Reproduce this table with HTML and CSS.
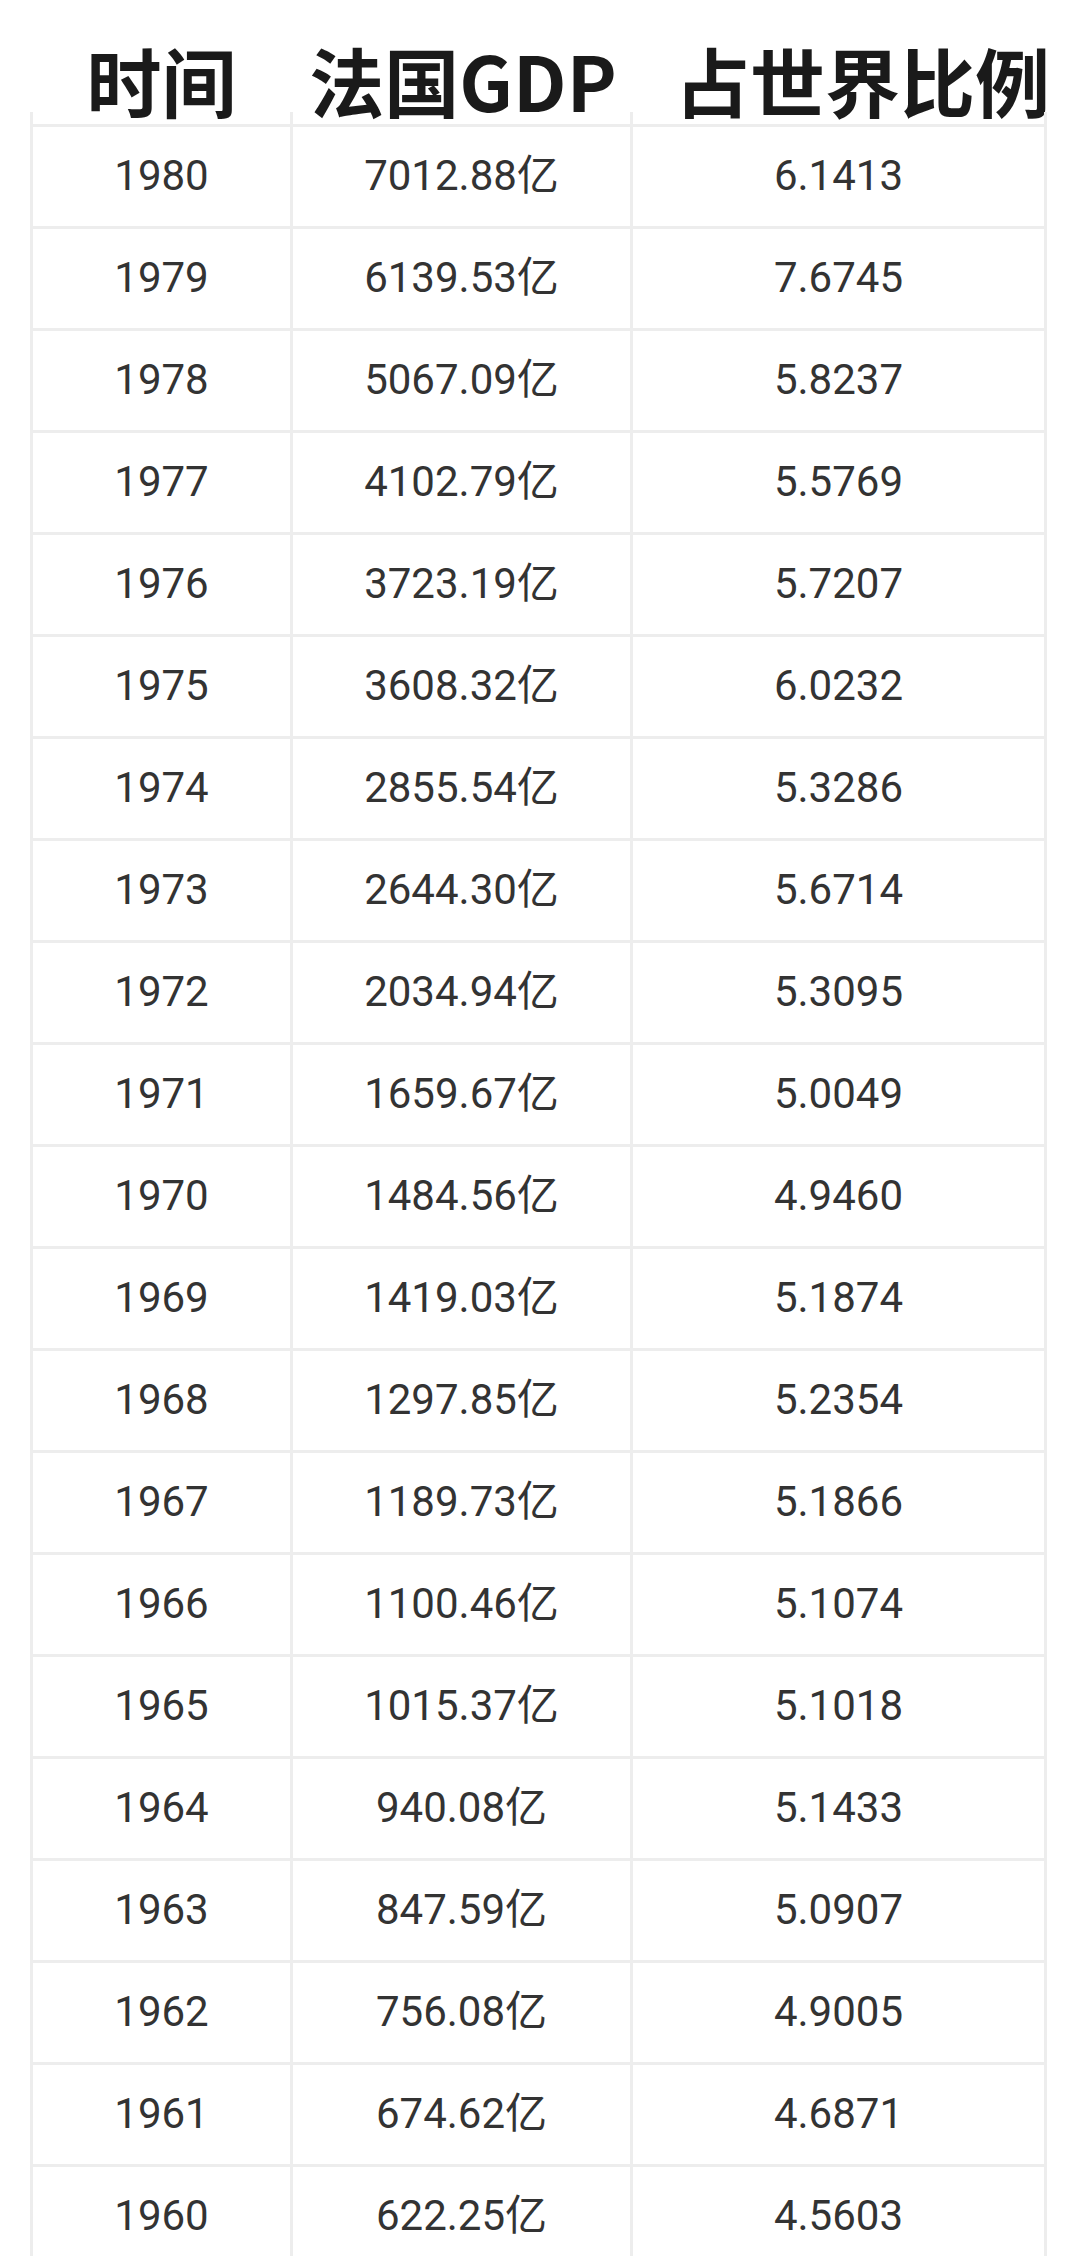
FILE: index.html
```html
<!DOCTYPE html>
<html lang="zh-CN">
<head>
<meta charset="utf-8">
<title>法国GDP</title>
<link rel="stylesheet" href="styles.css">
</head>
<body>
<div class="page">
  <div class="title">
    <div class="title-cell">时间</div>
    <div class="title-cell">法国GDP</div>
    <div class="title-cell title-shift">占世界比例</div>
  </div>
  <div class="grid">
    <div class="stub"></div><div class="stub"></div><div class="stub"></div>
    <div class="cell">1980</div><div class="cell">7012.88亿</div><div class="cell">6.1413</div>
    <div class="cell">1979</div><div class="cell">6139.53亿</div><div class="cell">7.6745</div>
    <div class="cell">1978</div><div class="cell">5067.09亿</div><div class="cell">5.8237</div>
    <div class="cell">1977</div><div class="cell">4102.79亿</div><div class="cell">5.5769</div>
    <div class="cell">1976</div><div class="cell">3723.19亿</div><div class="cell">5.7207</div>
    <div class="cell">1975</div><div class="cell">3608.32亿</div><div class="cell">6.0232</div>
    <div class="cell">1974</div><div class="cell">2855.54亿</div><div class="cell">5.3286</div>
    <div class="cell">1973</div><div class="cell">2644.30亿</div><div class="cell">5.6714</div>
    <div class="cell">1972</div><div class="cell">2034.94亿</div><div class="cell">5.3095</div>
    <div class="cell">1971</div><div class="cell">1659.67亿</div><div class="cell">5.0049</div>
    <div class="cell">1970</div><div class="cell">1484.56亿</div><div class="cell">4.9460</div>
    <div class="cell">1969</div><div class="cell">1419.03亿</div><div class="cell">5.1874</div>
    <div class="cell">1968</div><div class="cell">1297.85亿</div><div class="cell">5.2354</div>
    <div class="cell">1967</div><div class="cell">1189.73亿</div><div class="cell">5.1866</div>
    <div class="cell">1966</div><div class="cell">1100.46亿</div><div class="cell">5.1074</div>
    <div class="cell">1965</div><div class="cell">1015.37亿</div><div class="cell">5.1018</div>
    <div class="cell">1964</div><div class="cell">940.08亿</div><div class="cell">5.1433</div>
    <div class="cell">1963</div><div class="cell">847.59亿</div><div class="cell">5.0907</div>
    <div class="cell">1962</div><div class="cell">756.08亿</div><div class="cell">4.9005</div>
    <div class="cell">1961</div><div class="cell">674.62亿</div><div class="cell">4.6871</div>
    <div class="cell">1960</div><div class="cell">622.25亿</div><div class="cell">4.5603</div>
  </div>
</div>
</body>
</html>
```
FILE: styles.css
```css
html, body {
  margin: 0;
  padding: 0;
  background: #ffffff;
}
body {
  overflow: hidden;
}
.page {
  padding-left: 30px;
  width: 1050px;
}
.title {
  display: grid;
  grid-template-columns: 263px 340px 414px;
  height: 112px;
  box-sizing: border-box;
  padding-top: 42px;
  font-family: "Noto Sans CJK SC", "Noto Sans", sans-serif;
  font-weight: 700;
  font-size: 75px;
  line-height: 75px;
  color: #1a1a1a;
}
.title-cell {
  text-align: center;
  white-space: nowrap;
}
.title-shift {
  padding-left: 42px;
}
.grid {
  display: grid;
  grid-template-columns: 260px 340px 414px;
  border-left: 3px solid #ededed;
}
.stub {
  height: 12px;
  border-right: 3px solid #ededed;
}
.cell {
  height: 102px;
  box-sizing: border-box;
  border-top: 3px solid #ededed;
  border-right: 3px solid #ededed;
  display: flex;
  align-items: center;
  justify-content: center;
  padding-bottom: 2px;
  font-family: Roboto, "Noto Sans CJK SC", sans-serif;
  font-size: 42px;
  line-height: 50px;
  color: #333333;
  white-space: nowrap;
}
```
